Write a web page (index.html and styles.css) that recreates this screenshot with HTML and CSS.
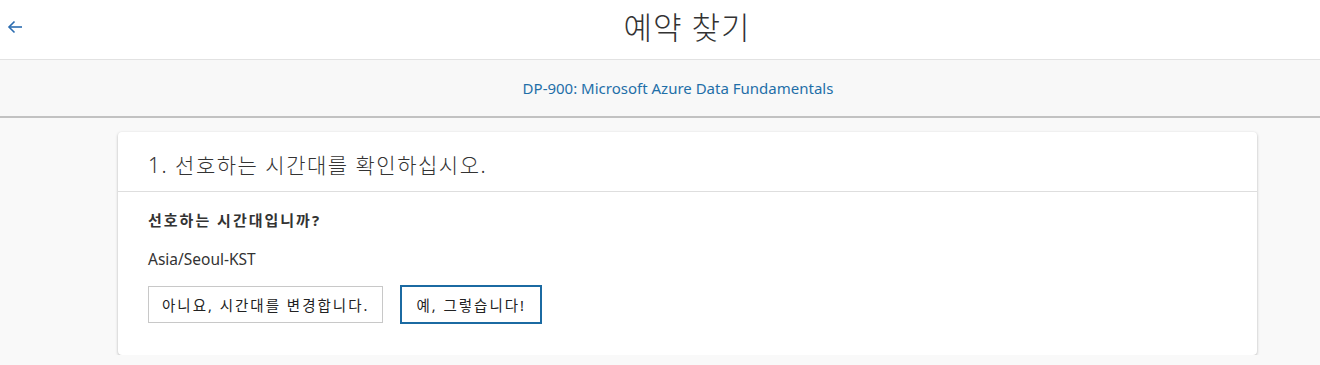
FILE: index.html
```html
<!DOCTYPE html>
<html lang="ko">
<head>
    <meta charset="UTF-8">
    <meta name="viewport" content="width=device-width, initial-scale=1.0">
    <title>예약 찾기</title>
    <link rel="stylesheet" href="styles.css">
</head>
<body>
    <header class="top-bar">
        <a class="back-link" href="#" aria-label="뒤로">
            <svg width="16" height="16" viewBox="0 0 16 16" fill="none" stroke="#2b6cb0" stroke-width="1.6">
                <path d="M15 8H2"/>
                <path d="M7.5 2.5L2 8l5.5 5.5"/>
            </svg>
        </a>
        <h1 class="page-title">예약 찾기</h1>
        <span></span>
    </header>

    <div class="exam-bar">
        <span class="exam-name">DP-900: Microsoft Azure Data Fundamentals</span>
    </div>

    <main class="content">
        <section class="card">
            <div class="card-header">
                <h2 class="card-title">1. 선호하는 시간대를 확인하십시오.</h2>
            </div>
            <div class="card-body">
                <p class="question">선호하는 시간대입니까?</p>
                <p class="timezone">Asia/Seoul-KST</p>
                <div class="actions">
                    <button class="btn">아니요, 시간대를 변경합니다.</button>
                    <button class="btn btn-primary">예, 그렇습니다!</button>
                </div>
            </div>
        </section>
    </main>
</body>
</html>
```

FILE: styles.css
```css
* {
    box-sizing: border-box;
    margin: 0;
    padding: 0;
}

body {
    background: #f9f9f9;
    color: #323232;
    font-family: "Noto Sans", "Noto Sans CJK KR", sans-serif;
}

.top-bar {
    display: grid;
    grid-template-columns: 40px 1fr 40px;
    align-items: center;
    height: 60px;
    background: #fff;
    border-bottom: 1px solid #e2e2e2;
}

.back-link {
    display: flex;
    padding-left: 7px;
    padding-bottom: 6px;
}

.page-title {
    text-align: center;
    font-size: 31px;
    font-weight: 300;
    letter-spacing: 1px;
    color: #333;
    padding-left: 54px;
    padding-bottom: 8px;
}

.exam-bar {
    display: flex;
    justify-content: center;
    align-items: center;
    height: 58px;
    background: #f8f8f8;
    border-bottom: 2px solid #c2c2c2;
    padding-left: 36px;
}

.exam-name {
    font-size: 15px;
    color: #1f6fa8;
}

.content {
    padding: 14px 0 0 118px;
}

.card {
    width: 1139px;
    background: #fff;
    border-radius: 4px;
    box-shadow: 0 1px 3px rgba(0, 0, 0, 0.28);
}

.card-header {
    height: 60px;
    display: flex;
    align-items: center;
    padding: 0 30px;
    border-bottom: 1px solid #dedede;
}

.card-title {
    font-size: 21px;
    font-weight: 300;
    letter-spacing: 1.5px;
    color: #333;
    padding-top: 4px;
}

.card-body {
    padding: 18px 30px 31px;
}

.question {
    font-size: 15px;
    font-weight: 700;
    letter-spacing: 2px;
    color: #333;
    line-height: 20px;
}

.timezone {
    font-size: 15.5px;
    color: #333;
    line-height: 20px;
    margin-top: 19px;
}

.actions {
    display: flex;
    align-items: center;
    gap: 17px;
    margin-top: 16px;
}

.btn {
    font-family: inherit;
    font-size: 14.5px;
    letter-spacing: 2px;
    color: #222;
    background: #fff;
    border: 1px solid #c8c8c8;
    height: 37px;
    padding: 0 13px;
    cursor: pointer;
}

.btn-primary {
    border: 2px solid #1b6aa2;
    height: 39px;
    padding: 0 14px;
}
```
